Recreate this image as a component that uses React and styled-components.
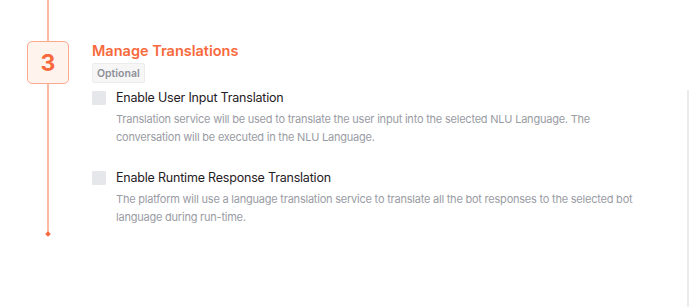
import React from "react";
import styled, { createGlobalStyle } from "styled-components";

const Global = createGlobalStyle`
  html, body { margin: 0; padding: 0; background: #ffffff; }
  body { font-family: Inter, "Noto Sans", sans-serif; -webkit-font-smoothing: antialiased; }
`;

const Page = styled.div`
  display: flex;
  height: 307px;
  width: 690px;
  overflow: hidden;
  background: #fff;
`;

const Main = styled.div`
  flex: 1;
  display: flex;
  padding-left: 27px;
`;

const Rail = styled.div`
  width: 42px;
  display: flex;
  flex-direction: column;
  align-items: center;
`;

const Line = styled.div`
  width: 2px;
  height: ${(p) => p.$h}px;
  background: #fdbba5;
`;

const StepBox = styled.div`
  box-sizing: border-box;
  width: 42px;
  height: 43px;
  border: 1px solid #fba98d;
  border-radius: 5px;
  background: #fff3ee;
  display: flex;
  align-items: center;
  justify-content: center;
  color: #f7693c;
  font-size: 23px;
  font-weight: 700;
`;

const Dot = styled.div`
  width: 4px;
  height: 4px;
  background: #f7693c;
  transform: rotate(45deg);
  margin-top: -1px;
`;

const Content = styled.div`
  margin-left: 23px;
  padding-top: 41px;
  width: 545px;
  display: flex;
  flex-direction: column;
  align-items: flex-start;
`;

const Title = styled.h2`
  margin: 0;
  font-size: 14.5px;
  line-height: 20px;
  font-weight: 600;
  color: #f7693c;
`;

const Badge = styled.span`
  box-sizing: border-box;
  margin-top: 2px;
  height: 20px;
  padding: 0 4px;
  display: inline-flex;
  align-items: center;
  background: #f6f6f7;
  border: 1px solid #ececee;
  border-radius: 2px;
  font-size: 10.5px;
  font-weight: 600;
  color: #8e9098;
`;

const Option = styled.div`
  margin-top: ${(p) => p.$mt}px;
  display: grid;
  grid-template-columns: 14px 1fr;
  column-gap: 10px;
  row-gap: 5px;
`;

const Check = styled.span`
  width: 14px;
  height: 14px;
  background: #e6e7ea;
  border-radius: 1px;
  align-self: center;
`;

const Label = styled.span`
  font-size: 12.5px;
  letter-spacing: -0.2px;
  line-height: 14px;
  color: #1f2024;
`;

const Desc = styled.p`
  grid-column: 2;
  margin: 0;
  font-size: 11px;
  letter-spacing: -0.22px;
  line-height: 18px;
  color: #9a9ca4;
`;

const Track = styled.div`
  width: 2px;
  margin-top: 90px;
  margin-right: 1px;
  background: #ebebed;
`;

export default function App() {
  return (
    <>
      <Global />
      <Page>
        <Main>
          <Rail>
            <Line $h={41} />
            <StepBox>3</StepBox>
            <Line $h={149} />
            <Dot />
          </Rail>
          <Content>
            <Title>Manage Translations</Title>
            <Badge>Optional</Badge>
            <Option $mt={8}>
              <Check />
              <Label>Enable User Input Translation</Label>
              <Desc>
                Translation service will be used to translate the user input into the selected NLU
                Language. The conversation will be executed in the NLU Language.
              </Desc>
            </Option>
            <Option $mt={25}>
              <Check />
              <Label>Enable Runtime Response Translation</Label>
              <Desc>
                The platform will use a language translation service to translate all the bot
                responses to the selected bot language during run-time.
              </Desc>
            </Option>
          </Content>
        </Main>
        <Track />
      </Page>
    </>
  );
}
